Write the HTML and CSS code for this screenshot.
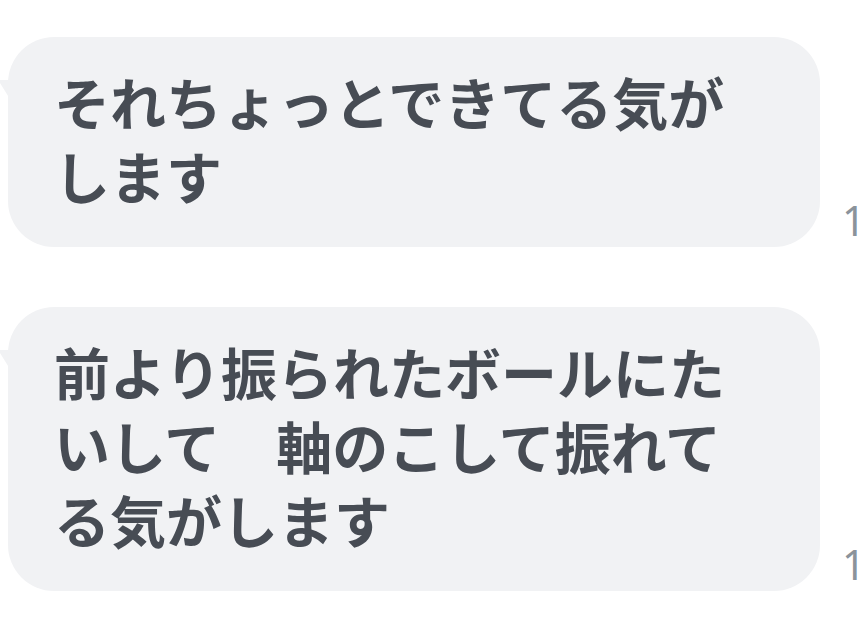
FILE: index.html
```html
<!DOCTYPE html>
<html>
<head>
    <meta charset="UTF-8">
    <meta name="viewport" content="width=device-width, initial-scale=1.0">
    <title>Chat</title>
    <link rel="stylesheet" href="styles.css">
</head>
<body>
    <div class="chat">
        <div class="row">
            <div class="bubble">
                <svg class="tail" width="14" height="26" viewBox="0 0 14 26"><path d="M0 0 H14 V26 Q7 14 0 3 Z" fill="#f1f2f4"/></svg>
                <p class="text">それちょっとできてる気がします</p>
            </div>
            <span class="time">15:42</span>
        </div>
        <div class="row">
            <div class="bubble">
                <svg class="tail" width="14" height="26" viewBox="0 0 14 26"><path d="M0 0 H14 V26 Q7 14 0 3 Z" fill="#f1f2f4"/></svg>
                <p class="text">前より振られたボールにたいして　軸のこして振れてる気がします</p>
            </div>
            <span class="time">15:43</span>
        </div>
    </div>
</body>
</html>
```

FILE: styles.css
```css
html, body {
    margin: 0;
    padding: 0;
    background: #ffffff;
    overflow: hidden;
}
body {
    font-family: "Noto Sans CJK JP", "Noto Sans", sans-serif;
}
.chat {
    display: flex;
    flex-direction: column;
    gap: 60px;
    padding: 37px 0 0 8px;
}
.row {
    display: flex;
    align-items: flex-end;
    gap: 22px;
}
.bubble {
    position: relative;
    flex: 0 0 812px;
    box-sizing: border-box;
    background-color: #f1f2f4;
    border-radius: 46px;
    padding: 27px 46px 35px;
}
.tail {
    position: absolute;
    left: -8px;
    top: 43px;
}
.text {
    margin: 0;
    font-size: 56px;
    line-height: 74px;
    font-weight: 700;
    color: #474c54;
}
.time {
    white-space: nowrap;
    font-family: "Noto Sans", sans-serif;
    font-size: 41px;
    line-height: 1;
    color: #8b939b;
    margin-bottom: 6px;
}
```
